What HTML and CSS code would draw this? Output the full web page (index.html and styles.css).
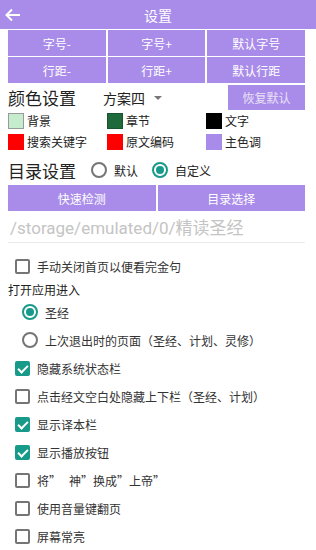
FILE: index.html
```html
<!DOCTYPE html>
<html>
<head>
<meta charset="utf-8">
<link rel="stylesheet" href="styles.css">
</head>
<body>
<div class="header">
  <svg class="back" width="16" height="14" viewBox="0 0 16 14"><path d="M15 7H2M7 1.5L1.5 7L7 12.5" fill="none" stroke="#fff" stroke-width="2"/></svg>
  <div class="title">设置</div>
</div>
<div class="wrap">
  <div class="btn-grid">
    <div class="pbtn">字号-</div>
    <div class="pbtn">字号+</div>
    <div class="pbtn">默认字号</div>
    <div class="pbtn">行距-</div>
    <div class="pbtn">行距+</div>
    <div class="pbtn">默认行距</div>
  </div>
  <div class="color-head">
    <div class="h-title">颜色设置</div>
    <div class="scheme">方案四<span class="tri"></span></div>
    <div class="restore">恢复默认</div>
  </div>
  <div class="swatches">
    <div class="sw"><span class="box c1"></span>背景</div>
    <div class="sw"><span class="box c2"></span>章节</div>
    <div class="sw"><span class="box c3"></span>文字</div>
    <div class="sw"><span class="box c4"></span>搜索关键字</div>
    <div class="sw"><span class="box c5"></span>原文编码</div>
    <div class="sw"><span class="box c6"></span>主色调</div>
  </div>
  <div class="dir-head">
    <div class="h-title">目录设置</div>
    <div class="radio-opt"><span class="radio"></span>默认</div>
    <div class="radio-opt"><span class="radio on"></span>自定义</div>
  </div>
  <div class="btn-row">
    <div class="pbtn">快速检测</div>
    <div class="pbtn">目录选择</div>
  </div>
  <div class="path">/storage/emulated/0/精读圣经</div>
  <div class="list">
    <div class="item"><span class="cb"></span>手动关闭首页以便看完金句</div>
    <div class="label">打开应用进入</div>
    <div class="item rad"><span class="radio on"></span>圣经</div>
    <div class="item rad"><span class="radio"></span>上次退出时的页面（圣经、计划、灵修）</div>
    <div class="item"><span class="cb on"></span>隐藏系统状态栏</div>
    <div class="item"><span class="cb"></span>点击经文空白处隐藏上下栏（圣经、计划）</div>
    <div class="item"><span class="cb on"></span>显示译本栏</div>
    <div class="item"><span class="cb on"></span>显示播放按钮</div>
    <div class="item"><span class="cb"></span>将”&nbsp;&nbsp;&nbsp;神”换成”上帝”</div>
    <div class="item"><span class="cb"></span>使用音量键翻页</div>
    <div class="item"><span class="cb"></span>屏幕常亮</div>
  </div>
</div>
</body>
</html>
```
FILE: styles.css
```css
* { box-sizing: border-box; }
body {
  margin: 0;
  width: 316px;
  background: #fff;
  font-family: "Noto Sans CJK SC", "Noto Sans", sans-serif;
  color: #222;
}
.header {
  height: 29px;
  background: #a98be9;
  display: flex;
  align-items: center;
  justify-content: center;
  position: relative;
}
.back { position: absolute; left: 5px; top: 8px; }
.title { color: #fff; font-size: 14px; line-height: 1; }
.wrap { padding: 0 11px 0 8px; }
.btn-grid {
  margin-top: 1px;
  display: grid;
  grid-template-columns: 1fr 1fr 1fr;
  grid-auto-rows: 26px;
  gap: 1px 2px;
}
.pbtn {
  background: #a98be9;
  color: #fff;
  font-size: 12px;
  display: flex;
  align-items: center;
  justify-content: center;
}
.color-head {
  height: 27px;
  display: flex;
  align-items: center;
  margin-top: 1px;
}
.h-title { font-size: 17px; line-height: 1; color: #222; }
.scheme {
  margin-left: 27px;
  font-size: 14px;
  display: flex;
  align-items: center;
  color: #222;
}
.tri {
  margin-left: 9px;
  width: 0; height: 0;
  border-left: 4px solid transparent;
  border-right: 4px solid transparent;
  border-top: 4px solid #777;
}
.restore {
  margin-left: auto;
  align-self: flex-start;
  margin-top: 1px;
  width: 77px;
  height: 25px;
  background: #a98be9;
  color: #e9e0f6;
  font-size: 12px;
  display: flex;
  align-items: center;
  justify-content: center;
}
.swatches {
  margin-top: 2px;
  display: grid;
  grid-template-columns: 99px 99px 1fr;
  row-gap: 5px;
}
.sw {
  display: flex;
  align-items: center;
  font-size: 12px;
  line-height: 16px;
  color: #222;
}
.box { width: 16px; height: 16px; margin-right: 3px; border: 1px solid rgba(0,0,0,0.2); }
.c1 { background: #c6ecce; border-color: #9a9a9a; }
.c2 { background: #1f6a3a; }
.c3 { background: #000; }
.c4 { background: #ff0000; border-color: #f00; }
.c5 { background: #ff0000; border-color: #f00; }
.c6 { background: #a98be9; border-color: #a98be9; }
.dir-head {
  margin-top: 5px;
  height: 30px;
  display: flex;
  align-items: center;
}
.radio-opt {
  display: flex;
  align-items: center;
  font-size: 12px;
  color: #222;
  margin-left: 15px;
}
.radio-opt + .radio-opt { margin-left: 14px; }
.radio {
  width: 16px;
  height: 16px;
  border: 2px solid #757575;
  border-radius: 50%;
  margin-right: 7px;
  display: flex;
  align-items: center;
  justify-content: center;
  flex: none;
}
.radio.on { border-color: #179a8a; }
.radio.on::after {
  content: "";
  width: 8px; height: 8px;
  border-radius: 50%;
  background: #179a8a;
}
.btn-row {
  display: grid;
  grid-template-columns: 1fr 1fr;
  gap: 2px;
  height: 26px;
}
.path {
  height: 32px;
  border-bottom: 1px solid #ececec;
  font-family: Roboto, "Noto Sans CJK SC", sans-serif;
  font-size: 17px;
  color: #c4c4c4;
  display: flex;
  align-items: center;
  padding-left: 2px;
}
.list { margin-top: 9px; }
.item {
  height: 28px;
  display: flex;
  align-items: center;
  font-size: 12px;
  color: #333;
  padding-left: 7px;
}
.item.rad { padding-left: 14px; }
.label { height: 18px; display: flex; align-items: center; font-size: 12px; color: #222; }
.cb {
  width: 15px;
  height: 15px;
  border: 2px solid #757575;
  border-radius: 2px;
  margin-right: 7px;
  flex: none;
  position: relative;
}
.cb.on { background: #179a8a; border-color: #179a8a; }
.cb.on::after {
  content: "";
  position: absolute;
  left: 3px;
  top: 0px;
  width: 4px;
  height: 8px;
  border-right: 2px solid #fff;
  border-bottom: 2px solid #fff;
  transform: rotate(45deg);
}
```
